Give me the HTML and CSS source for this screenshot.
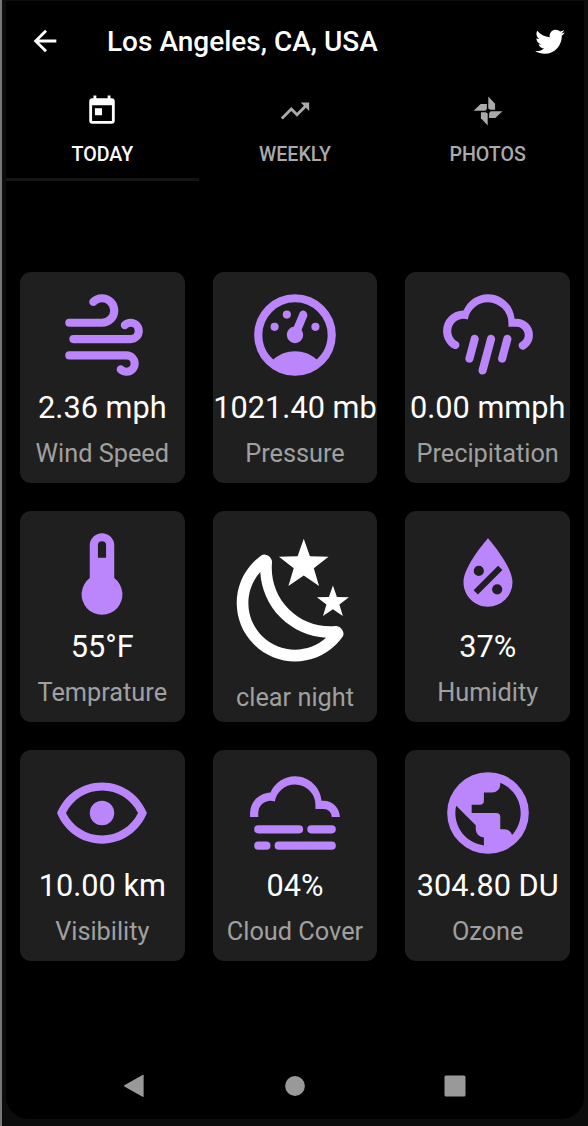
FILE: index.html
```html
<!DOCTYPE html>
<html lang="en">
<head>
  <meta charset="UTF-8" />
  <meta name="viewport" content="width=device-width, initial-scale=1.0"/>
  <title>Los Angeles, CA, USA</title>

  <link rel="stylesheet" href="styles.css">
</head>

<body>
  <div class="screen">
    <header class="toolbar">
      <svg class="icon" viewBox="0 0 24 24"><path d="M20 11H7.83l5.59-5.59L12 4l-8 8 8 8 1.41-1.41L7.83 13H20v-2z"/></svg>
      <h1>Los Angeles, CA, USA</h1>
      <svg class="icon" viewBox="0 0 24 24"><path d="M22.46,6C21.69,6.35 20.86,6.58 20,6.69C20.88,6.16 21.56,5.32 21.88,4.31C21.05,4.81 20.13,5.16 19.16,5.36C18.37,4.5 17.26,4 16,4C13.65,4 11.73,5.92 11.73,8.29C11.73,8.63 11.77,8.96 11.84,9.27C8.28,9.09 5.11,7.38 3,4.79C2.63,5.42 2.42,6.16 2.42,6.94C2.42,8.43 3.17,9.75 4.33,10.5C3.62,10.5 2.96,10.3 2.38,10C2.38,10 2.38,10 2.38,10.03C2.38,12.11 3.86,13.85 5.82,14.24C5.46,14.34 5.08,14.39 4.69,14.39C4.42,14.39 4.15,14.36 3.89,14.31C4.43,16 6,17.26 7.89,17.29C6.43,18.45 4.58,19.13 2.56,19.13C2.22,19.13 1.88,19.11 1.54,19.07C3.44,20.29 5.7,21 8.12,21C16,21 20.33,14.46 20.33,8.79C20.33,8.6 20.33,8.42 20.32,8.23C21.16,7.63 21.88,6.87 22.46,6Z"/></svg>
    </header>

    <nav class="tabs">
      <a class="tab active">
        <svg class="icon" viewBox="0 0 24 24"><path d="M19 3h-1V1h-2v2H8V1H6v2H5c-1.11 0-2 .9-2 2v14c0 1.1.89 2 2 2h14c1.1 0 2-.9 2-2V5c0-1.1-.9-2-2-2zm0 16H5V8h14v11zM7 10h5v5H7z"/></svg>
        <span>TODAY</span>
      </a>
      <a class="tab">
        <svg class="icon" viewBox="0 0 24 24"><path d="M16,6L18.29,8.29L13.41,13.17L9.41,9.17L2,16.59L3.41,18L9.41,12L13.41,16L19.71,9.71L22,12V6H16Z"/></svg>
        <span>WEEKLY</span>
      </a>
      <a class="tab">
        <svg class="icon" viewBox="0 0 24 24">
          <path d="M12.2,1.8L17,6.8V11.2H13.6L12.2,10.2Z"/>
          <path d="M12.2,1.8L17,6.8V11.2H13.6L12.2,10.2Z" transform="rotate(90 12 12)"/>
          <path d="M12.2,1.8L17,6.8V11.2H13.6L12.2,10.2Z" transform="rotate(180 12 12)"/>
          <path d="M12.2,1.8L17,6.8V11.2H13.6L12.2,10.2Z" transform="rotate(270 12 12)"/>
        </svg>
        <span>PHOTOS</span>
      </a>
    </nav>

    <main class="cards">
      <div class="card">
        <svg class="cardIcon" viewBox="0 0 24 24"><path d="M4,10A1,1 0 0,1 3,9A1,1 0 0,1 4,8H12A2,2 0 0,0 14,6A2,2 0 0,0 12,4C11.45,4 10.95,4.22 10.59,4.59C10.2,5 9.56,5 9.17,4.59C8.78,4.2 8.78,3.56 9.17,3.17C9.9,2.45 10.9,2 12,2A4,4 0 0,1 16,6A4,4 0 0,1 12,10H4M19,12A1,1 0 0,0 20,11A1,1 0 0,0 19,10C18.72,10 18.47,10.11 18.29,10.29C17.9,10.68 17.27,10.68 16.88,10.29C16.5,9.9 16.5,9.27 16.88,8.88C17.42,8.34 18.17,8 19,8A3,3 0 0,1 22,11A3,3 0 0,1 19,14H5A1,1 0 0,1 4,13A1,1 0 0,1 5,12H19M18,18H4A1,1 0 0,1 3,17A1,1 0 0,1 4,16H18A3,3 0 0,1 21,19A3,3 0 0,1 18,22C17.17,22 16.42,21.66 15.88,21.12C15.5,20.73 15.5,20.1 15.88,19.71C16.27,19.32 16.9,19.32 17.29,19.71C17.47,19.89 17.72,20 18,20A1,1 0 0,0 19,19A1,1 0 0,0 18,18Z"/></svg>
        <div class="value">2.36 mph</div>
        <div class="label">Wind Speed</div>
      </div>

      <div class="card">
        <svg class="cardIcon" viewBox="0 0 24 24"><path d="M17.3,18C19,16.5 20,14.4 20,12A8,8 0 0,0 12,4A8,8 0 0,0 4,12C4,14.4 5,16.5 6.7,18C8.2,16.7 10,16 12,16C14,16 15.9,16.7 17.3,18M12,2A10,10 0 0,1 22,12A10,10 0 0,1 12,22A10,10 0 0,1 2,12A10,10 0 0,1 12,2M7,9A1,1 0 0,1 8,10A1,1 0 0,1 7,11A1,1 0 0,1 6,10A1,1 0 0,1 7,9M10,6A1,1 0 0,1 11,7A1,1 0 0,1 10,8A1,1 0 0,1 9,7A1,1 0 0,1 10,6M17,9A1,1 0 0,1 18,10A1,1 0 0,1 17,11A1,1 0 0,1 16,10A1,1 0 0,1 17,9M14.4,6.1C14.9,6.3 15.1,6.9 15,7.4L13.6,10.8C13.8,11.1 14,11.5 14,12A2,2 0 0,1 12,14A2,2 0 0,1 10,12C10,11 10.7,10.1 11.7,10L13.1,6.7C13.3,6.1 13.9,5.9 14.4,6.1Z"/></svg>
        <div class="value">1021.40 mb</div>
        <div class="label">Pressure</div>
      </div>

      <div class="card">
        <svg class="cardIcon" viewBox="0 0 24 24"><path d="M9,12C9.53,12.14 9.85,12.69 9.71,13.22L8.41,18.05C8.27,18.59 7.72,18.9 7.19,18.76C6.65,18.62 6.34,18.07 6.5,17.54L7.78,12.71C7.92,12.17 8.47,11.86 9,12M13,12C13.53,12.14 13.85,12.69 13.71,13.22L11.64,20.95C11.5,21.5 10.95,21.8 10.41,21.66C9.88,21.5 9.56,20.97 9.7,20.43L11.78,12.71C11.92,12.17 12.47,11.86 13,12M17,12C17.53,12.14 17.85,12.69 17.71,13.22L16.41,18.05C16.27,18.59 15.72,18.9 15.19,18.76C14.65,18.62 14.34,18.07 14.5,17.54L15.78,12.71C15.92,12.17 16.47,11.86 17,12M17,10V9A5,5 0 0,0 12,4C9.5,4 7.45,5.82 7.06,8.19C6.73,8.07 6.37,8 6,8A3,3 0 0,0 3,11C3,12.11 3.6,13.08 4.5,13.6V13.59C5,13.87 5.14,14.5 4.87,14.96C4.59,15.43 4,15.6 3.5,15.32V15.33C2,14.47 1,12.85 1,11A5,5 0 0,1 6,6C7,3.65 9.3,2 12,2C15.43,2 18.24,4.66 18.5,8.03L19,8A4,4 0 0,1 23,12C23,13.5 22.2,14.77 21,15.46V15.46C20.5,15.73 19.91,15.57 19.63,15.09C19.36,14.61 19.5,14 20,13.72V13.73C20.6,13.39 21,12.74 21,12A2,2 0 0,0 19,10H17Z"/></svg>
        <div class="value">0.00 mmph</div>
        <div class="label">Precipitation</div>
      </div>

      <div class="card">
        <svg class="cardIcon" viewBox="0 0 24 24"><path d="M15,13V5A3,3 0 0,0 9,5V13A5,5 0 1,0 15,13M12,4A1,1 0 0,1 13,5V8H11V5A1,1 0 0,1 12,4Z"/></svg>
        <div class="value">55°F</div>
        <div class="label">Temprature</div>
      </div>

      <div class="card summary">
        <svg class="cardIcon" viewBox="0 0 24 24"><path d="M17.75,4.09L15.22,6.03L16.13,9.09L13.5,7.28L10.87,9.09L11.78,6.03L9.25,4.09L12.44,4L13.5,1L14.56,4L17.75,4.09M21.25,11L19.61,12.25L20.2,14.23L18.5,13.06L16.8,14.23L17.39,12.25L15.75,11L17.81,10.95L18.5,9L19.19,10.95L21.25,11M18.97,15.95C19.8,15.87 20.69,17.05 20.16,17.8C19.84,18.25 19.5,18.67 19.08,19.07C15.17,23 8.84,23 4.94,19.07C1.03,15.17 1.03,8.83 4.94,4.93C5.34,4.53 5.76,4.17 6.21,3.85C6.96,3.32 8.14,4.21 8.06,5.04C7.79,7.9 8.75,10.87 10.95,13.06C13.14,15.26 16.1,16.22 18.97,15.95M17.33,17.97C14.5,17.81 11.7,16.64 9.53,14.5C7.36,12.31 6.2,9.5 6.04,6.68C3.23,9.82 3.34,14.64 6.35,17.66C9.37,20.67 14.19,20.78 17.33,17.97Z"/></svg>
        <div class="label">clear night</div>
      </div>

      <div class="card">
        <svg class="cardIcon" viewBox="0 0 24 24"><path d="M12,3.25C12,3.25 6,10 6,14C6,17.32 8.69,20 12,20A6,6 0 0,0 18,14C18,10 12,3.25 12,3.25M14.47,9.97L15.53,11.03L9.53,17.03L8.47,15.97M9.75,10A1.25,1.25 0 0,1 11,11.25A1.25,1.25 0 0,1 9.75,12.5A1.25,1.25 0 0,1 8.5,11.25A1.25,1.25 0 0,1 9.75,10M14.25,14.5A1.25,1.25 0 0,1 15.5,15.75A1.25,1.25 0 0,1 14.25,17A1.25,1.25 0 0,1 13,15.75A1.25,1.25 0 0,1 14.25,14.5Z"/></svg>
        <div class="value">37%</div>
        <div class="label">Humidity</div>
      </div>

      <div class="card">
        <svg class="cardIcon" viewBox="0 0 24 24"><path d="M12,9A3,3 0 0,1 15,12A3,3 0 0,1 12,15A3,3 0 0,1 9,12A3,3 0 0,1 12,9M12,4.5C17,4.5 21.27,7.61 23,12C21.27,16.39 17,19.5 12,19.5C7,19.5 2.73,16.39 1,12C2.73,7.61 7,4.5 12,4.5M3.18,12C4.83,15.36 8.24,17.5 12,17.5C15.76,17.5 19.17,15.36 20.82,12C19.17,8.64 15.76,6.5 12,6.5C8.24,6.5 4.83,8.64 3.18,12Z"/></svg>
        <div class="value">10.00 km</div>
        <div class="label">Visibility</div>
      </div>

      <div class="card">
        <svg class="cardIcon" viewBox="0 0 24 24"><path d="M3,15H13A1,1 0 0,1 14,16A1,1 0 0,1 13,17H3A1,1 0 0,1 2,16A1,1 0 0,1 3,15M16,15H21A1,1 0 0,1 22,16A1,1 0 0,1 21,17H16A1,1 0 0,1 15,16A1,1 0 0,1 16,15M1,12A5,5 0 0,1 6,7C7,4.65 9.3,3 12,3C15.43,3 18.24,5.66 18.5,9.03L19,9C21.19,9 22.97,10.76 23,13H21A2,2 0 0,0 19,11H17V10A5,5 0 0,0 12,5C9.5,5 7.45,6.82 7.06,9.19C6.73,9.07 6.37,9 6,9A3,3 0 0,0 3,12V13H1V12M3,19H5A1,1 0 0,1 6,20A1,1 0 0,1 5,21H3A1,1 0 0,1 2,20A1,1 0 0,1 3,19M8,19H21A1,1 0 0,1 22,20A1,1 0 0,1 21,21H8A1,1 0 0,1 7,20A1,1 0 0,1 8,19Z"/></svg>
        <div class="value">04%</div>
        <div class="label">Cloud Cover</div>
      </div>

      <div class="card">
        <svg class="cardIcon" viewBox="0 0 24 24"><path d="M17.9,17.39C17.64,16.59 16.89,16 16,16H15V13A1,1 0 0,0 14,12H8V10H10A1,1 0 0,0 11,9V7H13A2,2 0 0,0 15,5V4.59C17.93,5.77 20,8.64 20,12C20,14.08 19.2,15.97 17.9,17.39M11,19.93C7.05,19.44 4,16.08 4,12C4,11.38 4.08,10.78 4.21,10.21L9,15V16A2,2 0 0,0 11,18M12,2A10,10 0 0,0 2,12A10,10 0 0,0 12,22A10,10 0 0,0 22,12A10,10 0 0,0 12,2Z"/></svg>
        <div class="value">304.80 DU</div>
        <div class="label">Ozone</div>
      </div>
    </main>

    <footer class="navBar">
      <svg class="navIcon" viewBox="0 0 22 24"><path d="M1.3 11.2L20 .8Q20.6 .6 20.6 1.2V22.6Q20.6 23.2 20 22.9L1.3 12.5Q.6 11.8 1.3 11.2Z"/></svg>
      <svg class="navIcon" viewBox="0 0 22 24"><circle cx="11" cy="12" r="9.9"/></svg>
      <svg class="navIcon" viewBox="0 0 22 24"><rect x=".5" y="1.5" width="21" height="21" rx="1.5"/></svg>
    </footer>
  </div>
</body>
</html>
```

FILE: styles.css
```css
* {
  box-sizing: border-box;
  margin: 0;
  padding: 0;
  font-family: Roboto, Arial, sans-serif;
}

/* phone frame around the screen */
body {
  background: #0c0c0c;
  height: 1126px;
  padding: 1px 4px 7px 3px;
  border-left: 2px solid #777;
  border-top: 0;
  overflow: hidden;
}

svg {
  display: block;
  fill: currentColor;
  flex: none;
}

.screen {
  background: #000;
  color: #fff;
  width: 578px;
  height: 1118px;
  margin-left: 1px;
  border-radius: 0 0 22px 22px;
  display: flex;
  flex-direction: column;
}

.toolbar {
  display: flex;
  align-items: center;
  height: 79px;
  padding: 0 17px 0 22px;
}

.toolbar h1 {
  flex: 1;
  margin-left: 45px;
  padding-top: 2px;
  font-size: 28px;
  font-weight: 500;
  line-height: 34px;
}

.icon {
  width: 34px;
  height: 34px;
}

.tabs {
  display: grid;
  grid-template-columns: repeat(3, 1fr);
  height: 101px;
}

.tab {
  display: flex;
  flex-direction: column;
  align-items: center;
  gap: 14px;
  padding-top: 14px;
  color: #aaa;
  font-size: 19.6px;
  font-weight: 500;
  line-height: 25px;
  border-bottom: 3px solid transparent;
}

.tab.active {
  color: #fff;
  border-color: #141414;
}

.cards {
  display: grid;
  grid-template-columns: repeat(3, 1fr);
  grid-auto-rows: 211px;
  gap: 28px;
  padding: 91px 14px 0;
}

.card {
  background: #1f1f1f;
  border-radius: 11px;
  min-width: 0;
  display: flex;
  flex-direction: column;
  align-items: center;
  padding-top: 14px;
  white-space: nowrap;
}

.cardIcon {
  width: 98px;
  height: 98px;
  color: #bb86fc;
  fill-rule: evenodd;
}

.value {
  margin-top: 6px;
  font-size: 30.7px;
  line-height: 36px;
}

.label {
  margin-top: 13px;
  color: #a0a0a0;
  font-size: 25.3px;
  line-height: 30px;
}

.summary {
  padding-top: 22px;
}

.summary .cardIcon {
  width: 140px;
  height: 140px;
  color: #fff;
}

.summary .label {
  margin-top: 10px;
}

.navBar {
  display: flex;
  justify-content: space-between;
  margin-top: auto;
  padding: 0 118px 21px 117px;
  color: #999;
}

.navIcon {
  width: 22px;
  height: 24px;
}
```
